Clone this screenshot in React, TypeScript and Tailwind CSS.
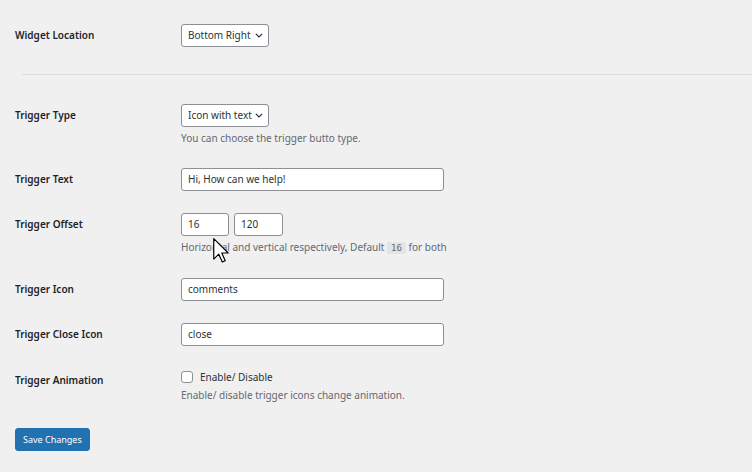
import React from "react";

const Chevron = () => (
  <svg width="8" height="5" viewBox="0 0 8 5" className="ml-auto">
    <path d="M0.8 0.8 L4 4 L7.2 0.8" fill="none" stroke="#2c3338" strokeWidth="1.2" />
  </svg>
);

function Row({ label, children, className = "" }: { label: string; children: React.ReactNode; className?: string }) {
  return (
    <div className={"flex " + className}>
      <div className="w-[166px] shrink-0 font-semibold text-[10px] leading-[23px] text-[#1d2327]">{label}</div>
      <div className="flex flex-col">{children}</div>
    </div>
  );
}

function Select({ value }: { value: string }) {
  return (
    <div className="flex items-center w-[88px] h-[23px] bg-white border border-[#8c8f94] rounded-[3px] pl-[6px] pr-[5px] text-[10px] text-[#2c3338]">
      <span>{value}</span>
      <Chevron />
    </div>
  );
}

function Input({ value, w = "w-[263px]" }: { value: string; w?: string }) {
  return (
    <div className={"flex items-center h-[23px] bg-white border border-[#8c8f94] rounded-[3px] px-[6px] text-[10px] text-[#2c3338] " + w}>
      {value}
    </div>
  );
}

const Desc = ({ children }: { children: React.ReactNode }) => (
  <div className="mt-[4px] text-[10px] leading-[14px] text-[#646970]">{children}</div>
);

export default function App() {
  return (
    <div
      className="relative w-[752px] h-[472px] bg-[#f0f0f1] overflow-hidden"
      style={{ fontFamily: '"Noto Sans", "Open Sans", sans-serif' }}
    >
      <div className="flex flex-col pl-[15px]">
        <Row label="Widget Location" className="mt-[24px]">
          <Select value="Bottom Right" />
        </Row>
        <div className="mt-[27px] ml-[7px] border-t border-[#dcdcde]" />
        <Row label="Trigger Type" className="mt-[29px]">
          <Select value="Icon with text" />
          <Desc>You can choose the trigger butto type.</Desc>
        </Row>
        <Row label="Trigger Text" className="mt-[23px]">
          <Input value="Hi, How can we help!" />
        </Row>
        <Row label="Trigger Offset" className="mt-[22px]">
          <div className="flex gap-[5px]">
            <Input value="16" w="w-[48px]" />
            <Input value="120" w="w-[49px]" />
          </div>
          <Desc>
            Horizontal and vertical respectively, Default{" "}
            <code
              className="bg-[#e4e4e5] px-[4px] py-[1px] text-[9px] text-[#646970]"
              style={{ fontFamily: '"DejaVu Sans Mono", monospace' }}
            >
              16
            </code>{" "}
            for both
          </Desc>
        </Row>
        <Row label="Trigger Icon" className="mt-[23px]">
          <Input value="comments" />
        </Row>
        <Row label="Trigger Close Icon" className="mt-[22px]">
          <Input value="close" />
        </Row>
        <Row label="Trigger Animation" className="mt-[23px]">
          <div className="flex items-center h-[14px] mt-[1px] text-[10px] text-[#2c3338]">
            <div className="w-[12px] h-[12px] bg-white border border-[#8c8f94] rounded-[3px] mr-[7px]" />
            Enable/ Disable
          </div>
          <Desc>Enable/ disable trigger icons change animation.</Desc>
        </Row>
        <div className="mt-[23px]">
          <button className="h-[23px] px-[7px] bg-[#2271b1] text-white text-[9px] rounded-[3px] border border-[#2271b1]">
            Save Changes
          </button>
        </div>
      </div>
      <svg
        className="absolute left-[213px] top-[238px]"
        width="16"
        height="25"
        viewBox="0 0 12 19"
      >
        <path
          d="M0.5 0.5 L0.5 16 L4.3 12.3 L7 18.3 L9.2 17.3 L6.6 11.4 L11.5 11.4 Z"
          fill="white"
          stroke="black"
          strokeWidth="0.9"
          strokeLinejoin="round"
        />
      </svg>
    </div>
  );
}
